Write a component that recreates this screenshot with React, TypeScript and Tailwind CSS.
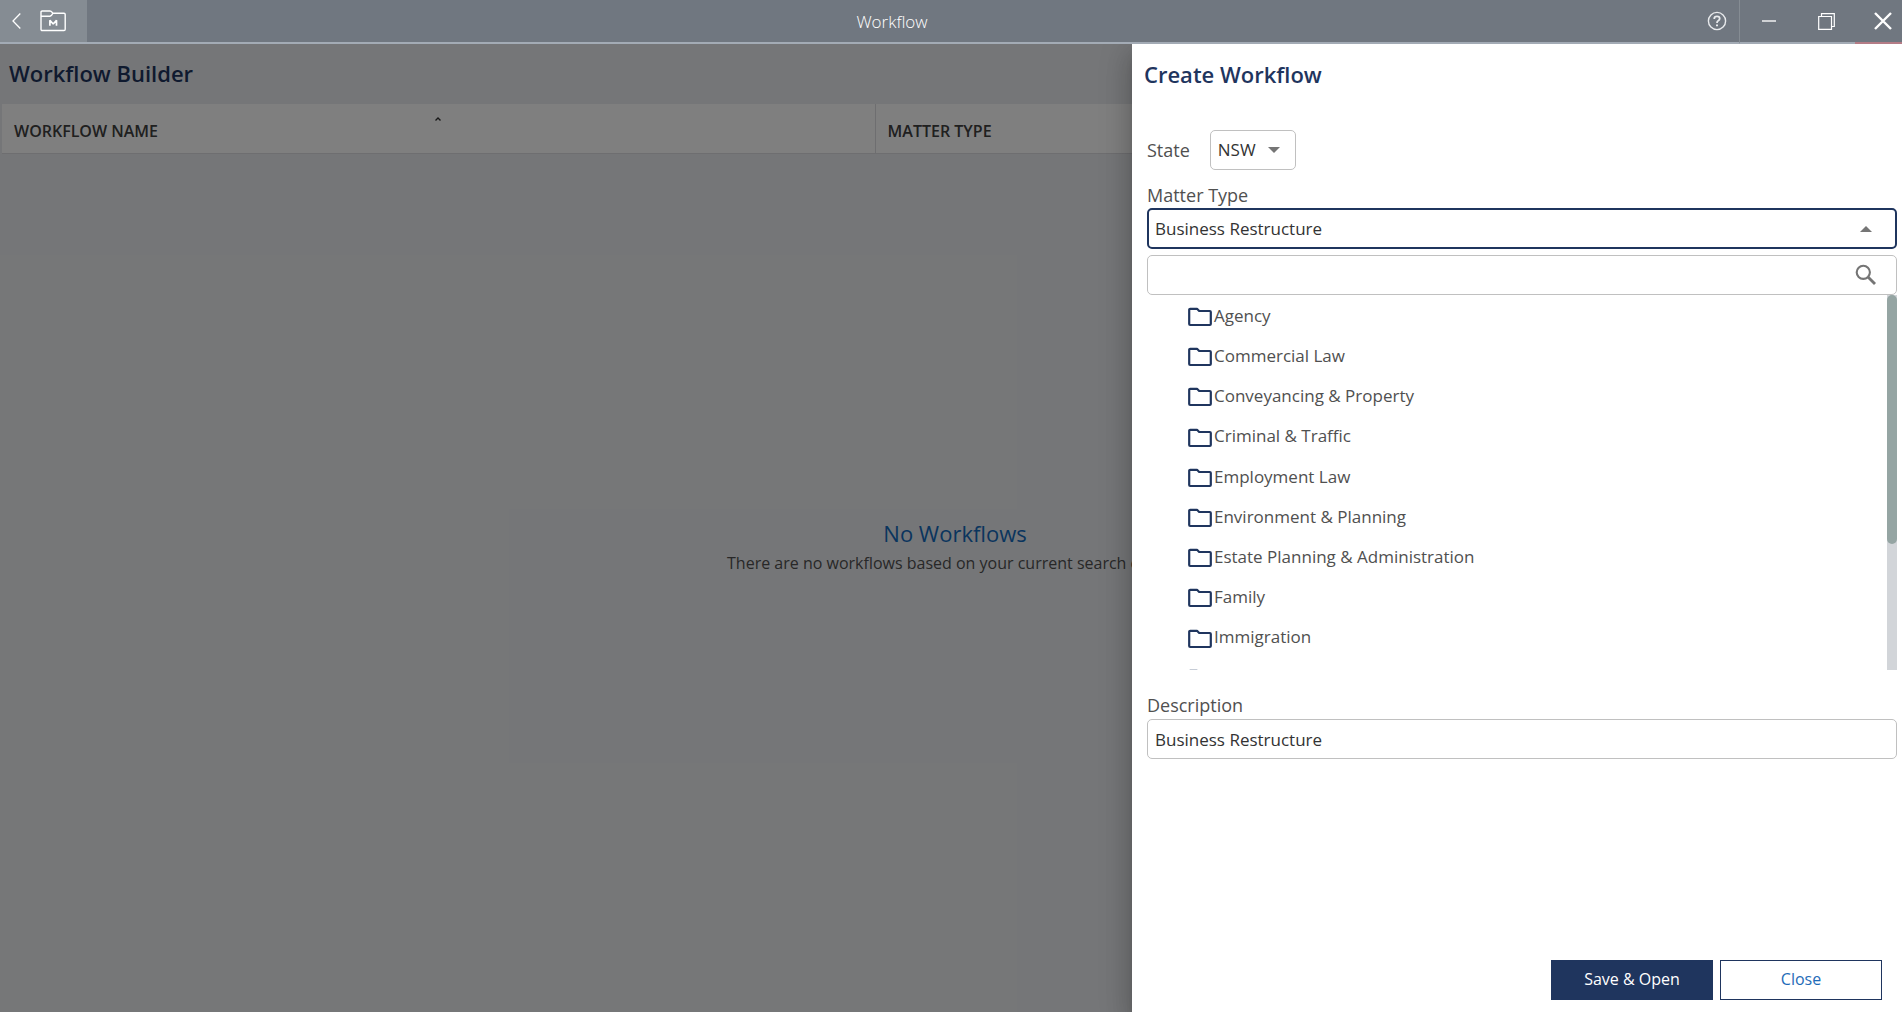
import { useState } from "react";

const matterTypes = [
  "Agency",
  "Commercial Law",
  "Conveyancing & Property",
  "Criminal & Traffic",
  "Employment Law",
  "Environment & Planning",
  "Estate Planning & Administration",
  "Family",
  "Immigration",
  "",
];

const FolderIcon = () => (
  <svg width="24" height="20" viewBox="0 0 24 20" fill="none" stroke="#1f355e" strokeWidth="2.2" strokeLinejoin="round" className="shrink-0">
    <path d="M2.2 1.8H9L11.2 4H21.8A1 1 0 0 1 22.8 5V17A1 1 0 0 1 21.8 18H2.2A1 1 0 0 1 1.2 17V2.8A1 1 0 0 1 2.2 1.8Z" />
  </svg>
);

const TitleBar = () => (
  <header className="flex h-11 shrink-0 bg-[#707780] text-white">
    <div className="flex w-[87px] items-center border-b-2 border-[#a3abb5] bg-[#858c93] pl-3">
      <button type="button" aria-label="Back" className="flex">
        <svg width="9" height="16" viewBox="0 0 9 16" fill="none" stroke="white" strokeWidth="1.3">
          <path d="M8.3 .5L1 8L8.3 15.5" />
        </svg>
      </button>
      <button type="button" aria-label="Matters" className="ml-[19px] flex">
        <svg width="26" height="22" viewBox="0 0 26 22" fill="none" stroke="white" strokeWidth="1.4" strokeLinejoin="round">
          <path d="M1 19.5V2.2Q1 1 2.2 1H10Q11.2 1 12 2.2L13 3.2H24Q25.2 3.2 25.2 4.4V19.3Q25.2 20.5 24 20.5H2.2Q1 20.5 1 19.3Z" />
          <path d="M1 6.3H10Q11.5 6 13 3.2" />
          <path d="M9.9 15.8V10.2L13.2 14L16.5 10.2V15.8" strokeWidth="1.7" strokeLinejoin="bevel" />
        </svg>
      </button>
    </div>
    <h1 className="flex flex-1 items-center justify-center border-b-2 border-[#a3abb5] pt-[2px] text-[17px] font-light">Workflow</h1>
    <button type="button" aria-label="Help" className="flex w-[43px] items-center justify-center border-r border-b-2 border-r-[#858c93] border-b-[#a3abb5] pr-[2px]">
      <svg width="20" height="20" viewBox="0 0 20 20" fill="none" stroke="#e8eaec" strokeWidth="1.4">
        <circle cx="10" cy="10" r="8.6" />
        <path d="M7.3 8V7.6Q7.3 5.3 10 5.3Q12.7 5.3 12.7 7.6Q12.7 9 11.2 9.8Q10 10.5 10 12" strokeWidth="1.8" />
        <path d="M10 13.4V15.2" strokeWidth="2" />
      </svg>
    </button>
    <button type="button" aria-label="Minimise" className="flex w-[57px] items-center justify-center border-b-2 border-[#a3abb5]">
      <svg width="14" height="2" viewBox="0 0 14 2">
        <path d="M0 1H14" stroke="#f0f1f2" strokeWidth="1.5" />
      </svg>
    </button>
    <button type="button" aria-label="Restore" className="flex w-[58px] items-center justify-center border-b-2 border-[#a3abb5]">
      <svg width="17" height="17" viewBox="0 0 17 17" fill="none" stroke="white" strokeWidth="1.2">
        <path d="M.7 3.5H13.5V16.3H.7Z" />
        <path d="M3.5 3.5V.7H16.3V13.5H13.5" />
      </svg>
    </button>
    <button type="button" aria-label="Close window" className="flex w-[47px] items-center justify-center border-b-2 border-[#b47c86] pl-2">
      <svg width="18" height="18" viewBox="0 0 18 18" stroke="white" strokeWidth="2.4">
        <path d="M1 1L17 17M17 1L1 17" />
      </svg>
    </button>
  </header>
);

const WorkflowBuilder = () => (
  <main className="flex flex-1 flex-col bg-[#ebedf0]">
    <h2 className="px-[9px] pt-[13px] pb-[15px] text-[22px] leading-8 font-semibold text-[#1f355e]">Workflow Builder</h2>
    <div className="px-[2px]">
      <table className="w-full table-fixed border-collapse bg-white text-left text-base text-[#404040]">
        <thead>
          <tr className="h-[49px] border-b border-[#dcdde0]">
            <th className="relative w-[46%] border-r border-[#dcdde0] px-3 pt-[6px] font-semibold">
              WORKFLOW NAME
              <svg width="6" height="4" viewBox="0 0 6 4" fill="none" stroke="#303030" strokeWidth="1.4" className="absolute top-[13px] left-1/2 -translate-x-1/2">
                <path d="M.5 3.5L3 1L5.5 3.5" />
              </svg>
            </th>
            <th className="px-3 pt-[6px] font-semibold">MATTER TYPE</th>
          </tr>
        </thead>
      </table>
    </div>
    <div className="flex flex-1 flex-col items-center pt-[363px] pl-2">
      <p className="text-[22px] leading-8 text-[#146abc]">No Workflows</p>
      <p className="text-base leading-7 text-[#505050]">There are no workflows based on your current search criteria</p>
    </div>
  </main>
);

const CreateWorkflow = () => {
  const [search, setSearch] = useState("");
  const [description, setDescription] = useState("Business Restructure");

  const visible = matterTypes.filter((m) => m.toLowerCase().includes(search.toLowerCase()));

  return (
    <aside className="absolute inset-y-0 right-0 flex w-[770px] flex-col bg-white text-[#505050] shadow-[0_8px_10px_-5px_rgba(0,0,0,0.2),0_16px_24px_2px_rgba(0,0,0,0.14),0_6px_30px_5px_rgba(0,0,0,0.12)]">
      <h2 className="px-3 pt-[14px] text-[22px] leading-8 font-semibold text-[#1f355e]">Create Workflow</h2>

      <form id="create-workflow" className="flex flex-1 flex-col pt-10 pr-[5px] pl-[15px]">
        <div className="flex items-center gap-5">
          <label htmlFor="state" className="text-lg">State</label>
          <div className="relative">
            <select id="state" className="h-10 w-[86px] appearance-none rounded-[5px] border border-[#c0c0c0] px-[7px] text-[17px] text-[#333]">
              <option>NSW</option>
            </select>
            <svg width="12" height="6" viewBox="0 0 12 6" className="pointer-events-none absolute top-[17px] right-4">
              <path d="M0 0H12L6 6Z" fill="#757575" />
            </svg>
          </div>
        </div>

        <label htmlFor="matter-type" className="mt-[13px] mb-[1px] text-lg leading-6">Matter Type</label>
        <div className="relative">
          <select id="matter-type" className="block h-[41px] w-full appearance-none rounded-[5px] border-2 border-[#1f355e] px-[6px] text-[17px] text-[#333]">
            <option>Business Restructure</option>
          </select>
          <svg width="12" height="6" viewBox="0 0 12 6" className="pointer-events-none absolute top-[18px] right-[25px]">
            <path d="M0 6H12L6 0Z" fill="#757575" />
          </svg>
        </div>

        <div className="relative mt-[6px]">
          <input
            type="text"
            aria-label="Search matter types"
            value={search}
            onChange={(e) => setSearch(e.target.value)}
            className="block h-10 w-full rounded-[5px] border border-[#c0c0c0] px-[7px] text-[17px] text-[#333]"
          />
          <svg width="22" height="22" viewBox="0 0 22 22" fill="none" stroke="#757575" className="pointer-events-none absolute top-[9px] right-5">
            <circle cx="8.3" cy="8.3" r="6.6" strokeWidth="2.1" />
            <path d="M13 13L20 20" strokeWidth="2.8" />
          </svg>
        </div>

        <div className="flex h-[375px] overflow-hidden">
          <ul className="grid h-[404px] flex-1 auto-rows-fr pt-[2px] pl-[41px]">
            {visible.map((name) => (
              <li key={name} className="flex items-center gap-[2px] text-[17px]">
                <FolderIcon />
                <span className="pb-[3px]">{name}</span>
              </li>
            ))}
          </ul>
          <div className="w-[10px] bg-[#d2d5d9]">
            <div className="h-[249px] rounded-full bg-[#95a5a3]"></div>
          </div>
        </div>

        <label htmlFor="description" className="mt-[23px] mb-[2px] text-lg leading-6">Description</label>
        <input
          id="description"
          type="text"
          value={description}
          onChange={(e) => setDescription(e.target.value)}
          className="h-10 w-full rounded-[5px] border border-[#c0c0c0] px-[7px] text-[17px] text-[#333]"
        />
      </form>

      <footer className="flex justify-end gap-[7px] pr-5 pb-3 text-base">
        <button type="submit" form="create-workflow" className="h-10 w-[162px] bg-[#1f355e] pb-[2px] text-white">Save &amp; Open</button>
        <button type="button" className="h-10 w-[162px] border border-[#1f355e] pb-[2px] text-[#1e6bb8]">Close</button>
      </footer>
    </aside>
  );
};

const App = () => {
  return (
    <div className="flex h-screen flex-col font-['Open_Sans','Noto_Sans',sans-serif]">
      <TitleBar />
      <div className="relative flex flex-1 overflow-hidden">
        <WorkflowBuilder />
        <div className="absolute inset-0 bg-black/50"></div>
        <CreateWorkflow />
      </div>
    </div>
  );
};

export default App;
